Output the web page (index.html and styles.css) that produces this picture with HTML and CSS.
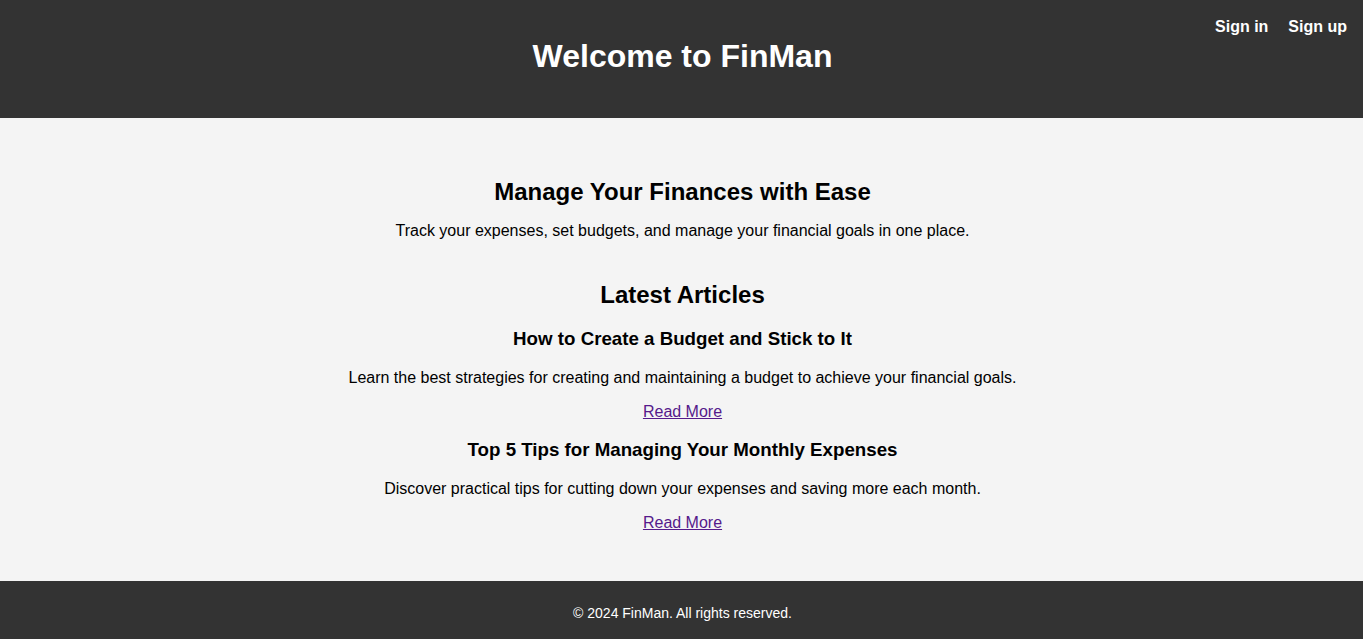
FILE: index.html
```html
<!DOCTYPE html>
<html lang="en">
<head>
<meta charset="utf-8">
<title>FinMan</title>
<link rel="stylesheet" href="styles.css">
</head>
<body>
<header class="site-header">
  <h1 class="site-title">Welcome to FinMan</h1>
  <nav class="auth-nav">
    <a href="#" class="auth-link">Sign in</a>
    <a href="#" class="auth-link">Sign up</a>
  </nav>
</header>
<main class="content">
  <section class="hero">
    <h2 class="hero-title">Manage Your Finances with Ease</h2>
    <p class="hero-text">Track your expenses, set budgets, and manage your financial goals in one place.</p>
  </section>
  <section class="articles">
    <h2 class="articles-title">Latest Articles</h2>
    <article class="article">
      <h3 class="article-title">How to Create a Budget and Stick to It</h3>
      <p class="article-text">Learn the best strategies for creating and maintaining a budget to achieve your financial goals.</p>
      <a href="#" class="read-more">Read More</a>
    </article>
    <article class="article">
      <h3 class="article-title">Top 5 Tips for Managing Your Monthly Expenses</h3>
      <p class="article-text">Discover practical tips for cutting down your expenses and saving more each month.</p>
      <a href="#" class="read-more">Read More</a>
    </article>
  </section>
</main>
<footer class="site-footer">
  <p class="footer-text">&copy; 2024 FinMan. All rights reserved.</p>
</footer>
</body>
</html>
```

FILE: styles.css
```css
html, body {
  margin: 0;
  padding: 0;
}
body {
  font-family: "Liberation Sans", Arial, sans-serif;
  color: #000;
  background: #f4f4f4;
}
.site-header {
  position: relative;
  background: #333;
  color: #fff;
  padding: 38px 0 43px 2px;
  text-align: center;
}
.site-title {
  margin: 0;
  font-size: 32px;
  line-height: 37px;
  font-weight: bold;
}
.auth-nav {
  position: absolute;
  top: 18px;
  right: 16px;
  display: flex;
  gap: 20px;
}
.auth-link {
  color: #fff;
  text-decoration: none;
  font-weight: bold;
  font-size: 16px;
  line-height: 18px;
}
.content {
  background: #f4f4f4;
  padding: 60px 20px 49px 22px;
  text-align: center;
}
.hero-title, .articles-title {
  margin: 0;
  font-size: 24px;
  line-height: 28px;
  font-weight: bold;
}
.hero-text {
  margin: 16px 0 0;
  font-size: 16px;
  line-height: 18px;
}
.articles {
  margin-top: 41px;
}
.article-title {
  margin: 19px 0 0;
  font-size: 18.72px;
  line-height: 22px;
  font-weight: bold;
}
.article + .article .article-title {
  margin-top: 18px;
}
.article-text {
  margin: 19px 0 16px;
  font-size: 16px;
  line-height: 18px;
}
.read-more {
  display: block;
  width: max-content;
  margin: 0 auto;
  font-size: 16px;
  line-height: 18px;
  color: #551a8b;
  text-decoration: underline;
}
.site-footer {
  background: #333;
  color: #fff;
  padding: 24px 0 18px 2px;
  text-align: center;
}
.footer-text {
  margin: 0;
  font-size: 14px;
  line-height: 16px;
}
```
